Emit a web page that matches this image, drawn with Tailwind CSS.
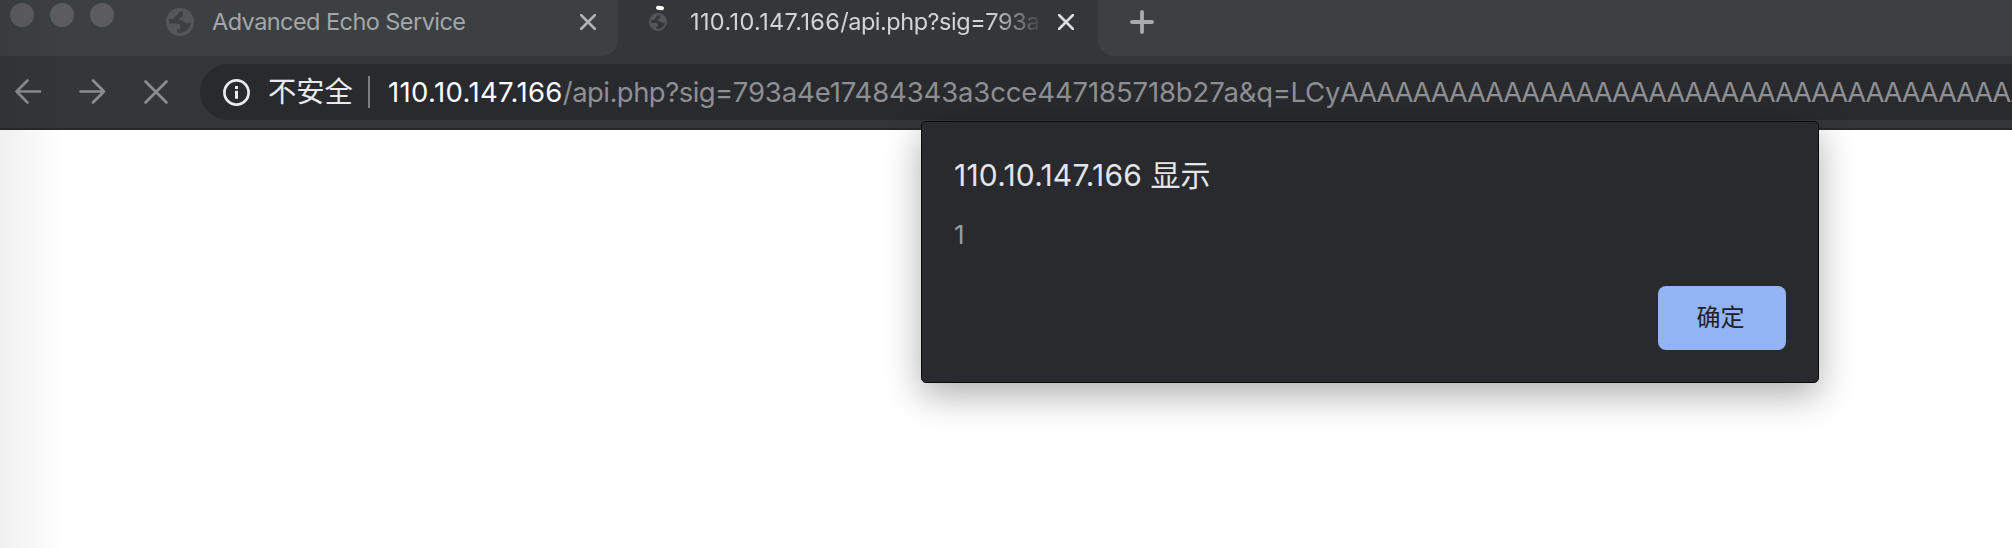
<!DOCTYPE html>
<html lang="zh-CN">
<head>
<meta charset="utf-8">
<title>110.10.147.166</title>
<script src="https://cdn.jsdelivr.net/npm/@tailwindcss/browser@4"></script>
</head>
<body class="relative h-[548px] w-[2012px] overflow-hidden bg-white font-[Inter,'Noto_Sans_CJK_SC',sans-serif]">
<header class="flex h-[130px] flex-col border-b-2 border-[#28282b] bg-[#35363a]">
  <div class="flex h-14">
    <div class="flex h-14 w-[618px] rounded-br-2xl bg-[#3c4043] pl-2.5">
      <div class="flex gap-4 pt-[3px]">
        <span class="size-6 rounded-full bg-[#5c5c60]"></span>
        <span class="size-6 rounded-full bg-[#5c5c60]"></span>
        <span class="size-6 rounded-full bg-[#5c5c60]"></span>
      </div>
      <svg class="mt-2 ml-[52px] size-7 shrink-0" viewBox="0 0 28 28"><circle cx="14" cy="14" r="14" fill="#54565a"/><path d="M17 3.200C13 3 11.500 4.500 11.300 7.500C8.500 7.600 8.200 9.200 8 11H3.200C3 12.500 3 14 3.300 15.600H10.500C13.500 15.700 14.500 17 14.200 19.500V21.300H11V24.600C18 26 24.500 21 25 14.500C22 15.800 20.500 15.500 19 14.500C17 13 16.500 12.300 13.500 11.800C13 9.500 14.500 8.900 16.800 9Z" fill="#3c4043"/></svg>
      <div class="mt-1.5 ml-[18px] w-[368px] whitespace-nowrap text-[23.5px] leading-8 tracking-[-0.56px] text-[#a3a7aa]">Advanced Echo Service</div>
      <svg class="mt-3.5 size-4 shrink-0" viewBox="0 0 16 16" fill="none" stroke="#b0b3b5" stroke-width="2.600" stroke-linecap="round"><path d="M1 1L15 15M15 1L1 15"/></svg>
    </div>
    <div class="flex h-14 w-[480px]">
      <svg class="mt-1 ml-[30px] h-7 w-6 shrink-0" viewBox="0 0 24 28"><path d="M10 3.700L14 4.300" stroke="#fff" stroke-width="4" stroke-linecap="round"/><g transform="translate(1 9) scale(.643)"><circle cx="14" cy="14" r="14" fill="#54565a"/><path d="M17 3.200C13 3 11.500 4.500 11.300 7.500C8.500 7.600 8.200 9.200 8 11H3.200C3 12.500 3 14 3.300 15.600H10.500C13.500 15.700 14.500 17 14.200 19.500V21.300H11V24.600C18 26 24.500 21 25 14.500C22 15.800 20.500 15.500 19 14.500C17 13 16.500 12.300 13.500 11.800C13 9.500 14.500 8.900 16.800 9Z" fill="#35363a"/></g></svg>
      <div class="mt-1.5 ml-[18px] w-[352px] mask-r-from-[300px] mask-r-to-[354px] whitespace-nowrap text-[23.5px] leading-8 text-[#d2d4d7]"><span class="tracking-[0.36px]">110.10.147.166</span><span class="tracking-[-0.48px]">/api.php?sig=</span><span class="tracking-[-0.3px]">793a</span></div>
      <svg class="mt-3.5 ml-4 size-4 shrink-0" viewBox="0 0 16 16" fill="none" stroke="#dcdee0" stroke-width="2.600" stroke-linecap="round"><path d="M1 1L15 15M15 1L1 15"/></svg>
    </div>
    <div class="h-14 flex-1 rounded-bl-2xl bg-[#3c4043] pt-2.5 pl-8">
      <svg class="size-6" viewBox="0 0 24 24" stroke="#a7abae" stroke-width="3.800" stroke-linecap="round"><path d="M12 2V22M2 12H22"/></svg>
    </div>
  </div>
  <div class="flex h-[72px] items-start pt-2">
    <svg class="mt-[14px] ml-[14px] size-7" viewBox="0 0 28 28" fill="none" stroke="#8b8c8f" stroke-width="2.700" stroke-linecap="round" stroke-linejoin="round"><path d="M26 13.500H2.500M13.500 2.500L2.500 13.500L13.500 24.500"/></svg>
    <svg class="mt-[14px] ml-9 size-7" viewBox="0 0 28 28" fill="none" stroke="#8b8c8f" stroke-width="2.700" stroke-linecap="round" stroke-linejoin="round"><path d="M2.500 13.500H26M15 2.500L26 13.500L15 24.500"/></svg>
    <svg class="mt-[14px] ml-9 size-7" viewBox="0 0 28 28" fill="none" stroke="#8b8c8f" stroke-width="2.700" stroke-linecap="round"><path d="M3.500 3.500L24.500 24.500M24.500 3.500L3.500 24.500"/></svg>
    <div class="ml-[30px] flex h-14 flex-1 items-center overflow-hidden rounded-l-full bg-[#292a2d] whitespace-nowrap">
      <svg class="ml-[22px] size-7 shrink-0" viewBox="0 0 28 28"><circle cx="14.500" cy="14.500" r="12.100" fill="none" stroke="#e8eaed" stroke-width="2.700"/><path d="M13 8H16V11H13ZM13 12.700H16V20.700H13Z" fill="#e8eaed"/></svg>
      <span class="ml-[18px] w-[100px] shrink-0 text-[28.3px] leading-10 text-[#e8eaed]">不安全</span>
      <span class="h-8 w-0.5 shrink-0 bg-[#7d7e81]"></span>
      <div class="ml-[18px] text-[27.5px] leading-10 text-[#8e8f92]"><span class="tracking-[0.35px] text-white">110.10.147.166</span><span class="tracking-[-0.54px]">/api.php?sig=</span><span class="tracking-[-0.13px]">793a4e17484343a3cce447185718b27a</span><span class="tracking-[-0.28px]">&amp;q=LCy</span><span class="tracking-[-1.26px]">AAAAAAAAAAAAAAAAAAAAAAAAAAAAAAAAAAAAAA</span></div>
    </div>
  </div>
</header>
<div class="absolute inset-y-0 left-0 w-16 bg-linear-to-r from-black/6 to-transparent"></div>
<div class="absolute top-[121px] left-[921px] flex h-[262px] w-[898px] flex-col rounded-[5px] border border-[#0b0b0c] bg-[#292a2d] px-8 shadow-[0_12px_36px_rgba(0,0,0,0.32)]">
  <div class="mt-[33px] h-10 text-[30px] leading-10 text-[#e4e5e8]"><span class="tracking-[0.2px]">110.10.147.166</span> 显示</div>
  <div class="mt-6 h-8 text-[26px] leading-8 text-[#989ba1]">1</div>
  <button class="mt-[35px] h-16 w-32 self-end rounded-lg bg-[#93b4f4] pr-[3px] text-2xl text-[#202124]">确定</button>
</div>
</body>
</html>
